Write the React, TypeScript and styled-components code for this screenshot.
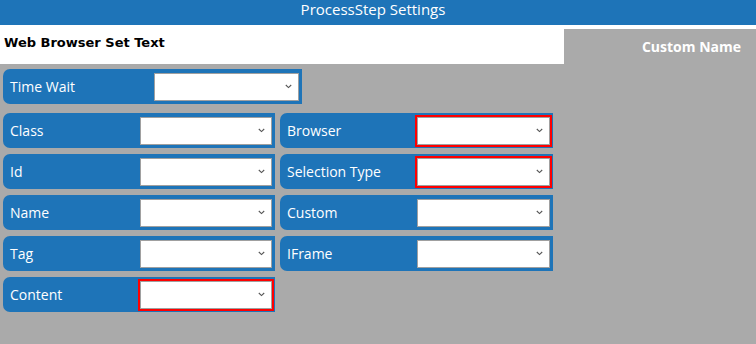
import React from "react";
import styled, { createGlobalStyle } from "styled-components";

const BLUE = "#1e74b8";
const GREY = "#aaaaaa";

const Global = createGlobalStyle`
  html, body { margin: 0; padding: 0; background: ${GREY}; }
  body { font-family: "Open Sans", "Noto Sans", sans-serif; }
  #root { min-height: 344px; }
`;

const Page = styled.div`
  width: 756px;
  height: 344px;
  background: ${GREY};
  overflow: hidden;
`;

const TitleBar = styled.div`
  height: 25px;
  background: ${BLUE};
  color: #ffffff;
  font-family: "Open Sans", sans-serif;
  font-size: 15px;
  line-height: 19px;
  text-align: center;
  padding-right: 10px;
  box-sizing: border-box;
`;

const SubHeader = styled.div`
  display: flex;
  height: 39px;
  background: #ffffff;
`;

const StepName = styled.div`
  flex: 1;
  padding: 10px 0 0 4px;
  font-family: "DejaVu Sans", Verdana, sans-serif;
  font-weight: bold;
  font-size: 13px;
  color: #000000;
`;

const CustomName = styled.div`
  width: 192px;
  margin-top: 4px;
  background: ${GREY};
  color: #ffffff;
  font-family: "Open Sans", sans-serif;
  font-weight: bold;
  font-size: 14px;
  text-align: right;
  padding: 8px 15px 0 0;
  box-sizing: border-box;
`;

const Body = styled.div`
  padding: 5px 3px;
`;

const FieldRow = styled.div<{ $width: number }>`
  display: flex;
  align-items: center;
  box-sizing: border-box;
  width: ${(p) => p.$width}px;
  height: 35px;
  padding: 0 3px 0 7px;
  background: ${BLUE};
  border-radius: 7px 0 0 7px;
`;

const Label = styled.span`
  flex: 1;
  color: #ffffff;
  font-family: "Open Sans", sans-serif;
  font-size: 14px;
  white-space: nowrap;
`;

const SelectBox = styled.div<{ $width: number; $invalid?: boolean }>`
  display: flex;
  align-items: center;
  justify-content: flex-end;
  box-sizing: border-box;
  width: ${(p) => p.$width}px;
  height: 28px;
  padding-right: 6px;
  background: #ffffff;
  border: 1px solid #a0a0a0;
  outline: ${(p) => (p.$invalid ? "2px solid #ff0000" : "none")};
`;

const TopRow = styled.div`
  margin-bottom: 9px;
`;

const Grid = styled.div`
  display: grid;
  grid-template-columns: 272px 273px;
  column-gap: 5px;
  row-gap: 6px;
`;

const Chevron = () => (
  <svg width="7" height="5" viewBox="0 0 7 5">
    <path d="M0.8 1 L3.5 3.6 L6.2 1" fill="none" stroke="#555" strokeWidth="1.1" />
  </svg>
);

type FieldProps = { label: string; rowWidth: number; selectWidth: number; invalid?: boolean };

const Field = ({ label, rowWidth, selectWidth, invalid }: FieldProps) => (
  <FieldRow $width={rowWidth}>
    <Label>{label}</Label>
    <SelectBox $width={selectWidth} $invalid={invalid}>
      <Chevron />
    </SelectBox>
  </FieldRow>
);

const fields: { label: string; col: number; invalid?: boolean }[] = [
  { label: "Class", col: 0 },
  { label: "Browser", col: 1, invalid: true },
  { label: "Id", col: 0 },
  { label: "Selection Type", col: 1, invalid: true },
  { label: "Name", col: 0 },
  { label: "Custom", col: 1 },
  { label: "Tag", col: 0 },
  { label: "IFrame", col: 1 },
  { label: "Content", col: 0, invalid: true },
];

export default function App() {
  return (
    <Page>
      <Global />
      <TitleBar>ProcessStep Settings</TitleBar>
      <SubHeader>
        <StepName>Web Browser Set Text</StepName>
        <CustomName>Custom Name</CustomName>
      </SubHeader>
      <Body>
        <TopRow>
          <Field label="Time Wait" rowWidth={299} selectWidth={145} />
        </TopRow>
        <Grid>
          {fields.map((f) => (
            <Field
              key={f.label}
              label={f.label}
              rowWidth={f.col === 0 ? 272 : 273}
              selectWidth={f.col === 0 ? 132 : 133}
              invalid={f.invalid}
            />
          ))}
        </Grid>
      </Body>
    </Page>
  );
}
